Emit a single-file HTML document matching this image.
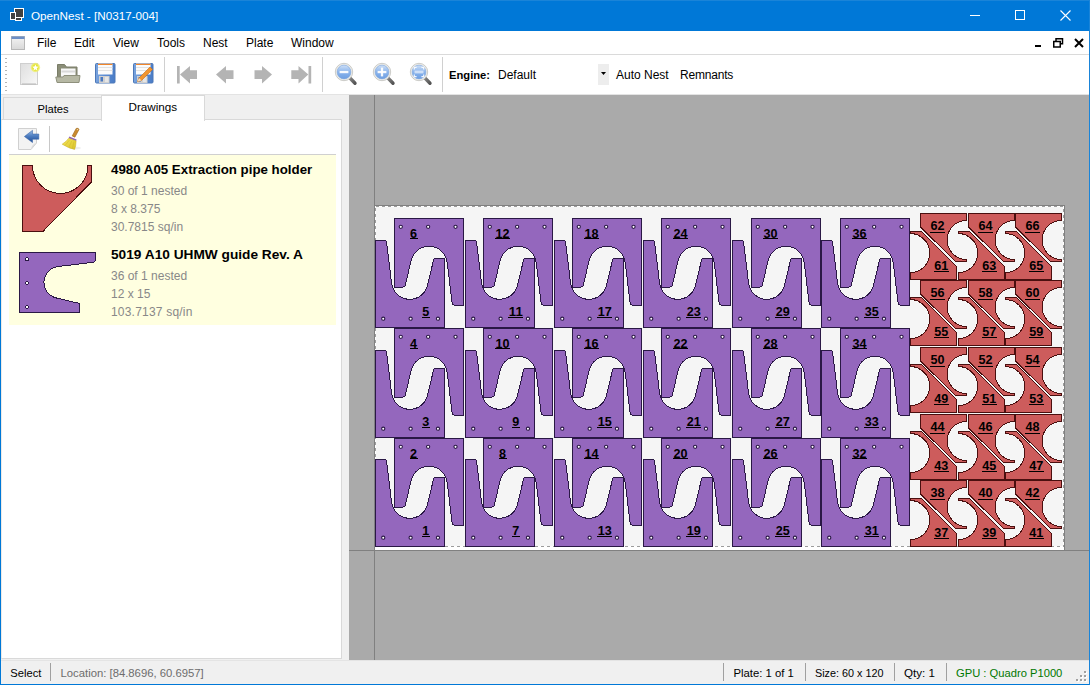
<!DOCTYPE html>
<html><head><meta charset="utf-8"><title>OpenNest</title><style>
html,body{margin:0;padding:0;width:1090px;height:685px;overflow:hidden;background:#fff;}
body{position:relative;font-family:"Liberation Sans",sans-serif;}
.a{position:absolute;}
.t{position:absolute;white-space:nowrap;line-height:1;font-family:"Liberation Sans",sans-serif;}
.lbl{font-family:"Liberation Sans",sans-serif;font-weight:700;font-size:12.2px;fill:#000;}
</style></head><body>
<div class="a" style="left:0px;top:0px;width:1090px;height:685px;background:#0078d7;"></div>
<div class="a" style="left:1px;top:31px;width:1088px;height:653px;background:#fff;"></div>
<div class="a" style="left:0px;top:0px;width:1090px;height:1px;background:#1a84d8;"></div>
<div class="a" style="left:1089px;top:0px;width:1px;height:685px;background:#1a84d8;"></div>
<svg class="a" style="left:10px;top:8px" width="15" height="14" viewBox="0 0 15 14" >
<rect x="4.5" y="0.5" width="9" height="9" fill="#404040" stroke="#fff"/>
<rect x="0.5" y="4.5" width="5" height="7" fill="#404040" stroke="#fff"/>
<rect x="5.5" y="9.5" width="6" height="3" fill="#404040" stroke="#fff"/>
</svg>
<div class="t" style="left:31px;top:9.71px;font-size:11.7px;font-weight:400;color:#fff;">OpenNest - [N0317-004]</div>
<div class="a" style="left:970px;top:15px;width:10px;height:1px;background:#fff;"></div>
<div class="a" style="left:1015px;top:10px;width:8px;height:8px;border:1px solid #fff"></div>
<svg class="a" style="left:1060px;top:10px" width="12" height="11" viewBox="0 0 12 11"><path d="M0.5,0.5 L10.5,10.5 M10.5,0.5 L0.5,10.5" stroke="#fff" stroke-width="1.1"/></svg>
<svg class="a" style="left:11px;top:36px" width="14" height="14" viewBox="0 0 14 14" >
<defs><linearGradient id="mg" x1="0" y1="0" x2="0" y2="1"><stop offset="0" stop-color="#f4f4f4"/><stop offset="1" stop-color="#d8d8d8"/></linearGradient></defs>
<rect x="0.5" y="0.5" width="13" height="13" fill="url(#mg)" stroke="#b8b8b8"/>
<rect x="0.5" y="0.5" width="13" height="2.5" fill="#6d8fc6"/>
</svg>
<div class="t" style="left:37px;top:37.16px;font-size:12px;font-weight:400;color:#000;">File</div>
<div class="t" style="left:74px;top:37.16px;font-size:12px;font-weight:400;color:#000;">Edit</div>
<div class="t" style="left:113px;top:37.16px;font-size:12px;font-weight:400;color:#000;">View</div>
<div class="t" style="left:157px;top:37.16px;font-size:12px;font-weight:400;color:#000;">Tools</div>
<div class="t" style="left:203px;top:37.16px;font-size:12px;font-weight:400;color:#000;">Nest</div>
<div class="t" style="left:246px;top:37.16px;font-size:12px;font-weight:400;color:#000;">Plate</div>
<div class="t" style="left:291px;top:37.16px;font-size:12px;font-weight:400;color:#000;">Window</div>
<div class="a" style="left:1035px;top:45px;width:6px;height:2px;background:#000;"></div>
<svg class="a" style="left:1053px;top:38px" width="11" height="10" viewBox="0 0 11 10"><rect x="3" y="0.75" width="6.5" height="5" fill="none" stroke="#000" stroke-width="1.5"/><rect x="0.75" y="3.5" width="6.5" height="5.5" fill="#fff" stroke="#000" stroke-width="1.5"/></svg>
<svg class="a" style="left:1074px;top:38px" width="10" height="10" viewBox="0 0 10 10"><path d="M1,1 L9,9 M9,1 L1,9" stroke="#000" stroke-width="2"/></svg>
<div class="a" style="left:1px;top:54px;width:1088px;height:1px;background:#dadada;"></div>
<div class="a" style="left:1px;top:94px;width:1088px;height:1px;background:#e3e3e3;"></div>
<div class="a" style="left:5px;top:58px;width:2px;height:34px;background:repeating-linear-gradient(#b4b4b4 0 1px,transparent 1px 4px);"></div>
<div class="a" style="left:164px;top:57px;width:1px;height:35px;background:#d0d0d0;"></div>
<div class="a" style="left:322px;top:57px;width:1px;height:35px;background:#d0d0d0;"></div>
<div class="a" style="left:442px;top:57px;width:1px;height:35px;background:#d0d0d0;"></div>
<svg class="a" style="left:19px;top:62px" width="23" height="24" viewBox="0 0 23 24" >
<defs><linearGradient id="gnew" x1="0" y1="0" x2="1" y2="1"><stop offset="0" stop-color="#dedede"/><stop offset="1" stop-color="#f8f8f8"/></linearGradient><radialGradient id="gstar"><stop offset="0.55" stop-color="#e6e62e"/><stop offset="1" stop-color="#f0f07a" stop-opacity="0.6"/></radialGradient></defs>
<rect x="1.5" y="1.5" width="17" height="21" fill="url(#gnew)" stroke="#cfcfcf"/>
<rect x="3" y="21.5" width="14" height="1" fill="#b8b8b8"/>
<circle cx="16.4" cy="5.5" r="4.8" fill="url(#gstar)"/>
<path d="M16.4,2.4 L17.3,4.6 L19.5,4.8 L17.8,6.3 L18.3,8.5 L16.4,7.3 L14.5,8.5 L15,6.3 L13.3,4.8 L15.5,4.6 Z" fill="#fff"/>
</svg>
<svg class="a" style="left:55px;top:63px" width="26" height="21" viewBox="0 0 26 21" >
<path d="M2.5,1.5 H9.5 L11.5,4 H22 V14 H2.5 Z" fill="#8b8e78" stroke="#7a7d68"/>
<rect x="6" y="5.5" width="14.5" height="9" fill="#f8f8f8"/>
<rect x="6.5" y="7.5" width="13.5" height="2" fill="#d8d8d8"/>
<path d="M0.8,14 H8 L9,12.5 H25 L24,19.5 H2 Z" fill="#b6b8a4" stroke="#8e907c"/>
</svg>
<svg class="a" style="left:95px;top:63px" width="21" height="21" viewBox="0 0 21 21" >
<defs><linearGradient id="gfl" x1="0" y1="0" x2="1" y2="0"><stop offset="0" stop-color="#7aa4de"/><stop offset="0.5" stop-color="#5a8bd2"/><stop offset="1" stop-color="#4a7cc6"/></linearGradient></defs>
<rect x="0.5" y="0.5" width="19.5" height="19.5" rx="1" fill="url(#gfl)" stroke="#4d78b8"/>
<rect x="3" y="0.5" width="14.5" height="11" fill="#fbfbfb"/>
<rect x="3" y="0.8" width="14.5" height="1.2" fill="#f0862a"/>
<rect x="3" y="4" width="14.5" height="0.8" fill="#dcdcdc"/>
<rect x="3" y="7" width="14.5" height="0.8" fill="#dcdcdc"/>
<rect x="4" y="13" width="10.5" height="7" fill="#d0d0d0"/>
<rect x="5.5" y="14" width="2.5" height="4.5" fill="#4a78c0"/>
<rect x="10" y="14" width="3.5" height="5" fill="#e6e6e6"/>
</svg>
<svg class="a" style="left:133px;top:63px" width="21" height="21" viewBox="0 0 21 21" >
<defs><linearGradient id="gfl" x1="0" y1="0" x2="1" y2="0"><stop offset="0" stop-color="#7aa4de"/><stop offset="0.5" stop-color="#5a8bd2"/><stop offset="1" stop-color="#4a7cc6"/></linearGradient></defs>
<rect x="0.5" y="0.5" width="19.5" height="19.5" rx="1" fill="url(#gfl)" stroke="#4d78b8"/>
<rect x="3" y="0.5" width="14.5" height="11" fill="#fbfbfb"/>
<rect x="3" y="0.8" width="14.5" height="1.2" fill="#f0862a"/>
<rect x="3" y="4" width="14.5" height="0.8" fill="#dcdcdc"/>
<rect x="3" y="7" width="14.5" height="0.8" fill="#dcdcdc"/>
<rect x="4" y="13" width="10.5" height="7" fill="#d0d0d0"/>
<rect x="5.5" y="14" width="2.5" height="4.5" fill="#4a78c0"/>
<rect x="10" y="14" width="3.5" height="5" fill="#e6e6e6"/>
<path d="M4.5,18.5 L6,15 L17,4 L19.5,6.5 L8.5,17.5 Z" fill="#f2952e" stroke="#c86d1a" stroke-width="0.6"/>
<path d="M4.5,18.5 L6,15 L8.5,17.5 Z" fill="#f4dcb8"/></svg>
<svg class="a" style="left:177px;top:66px" width="21" height="19" viewBox="0 0 21 19" ><rect x="0" y="0" width="2.7" height="17.5" fill="#b4b4b4"/><path d="M3,8.5 L13,0 V4.2 H20 V13 H13 V17.5 Z" fill="#b4b4b4"/></svg>
<svg class="a" style="left:215.5px;top:66px" width="21" height="19" viewBox="0 0 21 19" ><path d="M0,8.5 L10,0 V4.2 H17.5 V13 H10 V17.5 Z" fill="#b4b4b4"/></svg>
<svg class="a" style="left:254px;top:66px" width="21" height="19" viewBox="0 0 21 19" ><path d="M18,8.5 L8,0 V4.2 H0.5 V13 H8 V17.5 Z" fill="#b4b4b4"/></svg>
<svg class="a" style="left:290.8px;top:66px" width="21" height="19" viewBox="0 0 21 19" ><rect x="17.5" y="0" width="2.7" height="17.5" fill="#b4b4b4"/><path d="M17.3,8.5 L7.5,0 V4.2 H0.3 V13 H7.5 V17.5 Z" fill="#b4b4b4"/></svg>
<svg class="a" style="left:333.6px;top:61.6px" width="24" height="24" viewBox="0 0 24 24" >
<defs><linearGradient id="glens" x1="0" y1="0" x2="0" y2="1"><stop offset="0" stop-color="#cfe0f7"/><stop offset="0.5" stop-color="#8ab4ec"/><stop offset="1" stop-color="#6e9fe2"/></linearGradient>
<linearGradient id="ghdl" x1="0" y1="0" x2="1" y2="1"><stop offset="0" stop-color="#8a8a8a"/><stop offset="1" stop-color="#555"/></linearGradient></defs>
<path d="M15.2,15.2 L21,21.2" stroke="url(#ghdl)" stroke-width="3.4" stroke-linecap="round"/>
<circle cx="10" cy="10" r="8.7" fill="#eeeeea" stroke="#b9b9b4" stroke-width="0.7"/>
<circle cx="10" cy="10" r="6.9" fill="url(#glens)" stroke="#7aa3dc" stroke-width="0.6"/>
<rect x="5.6" y="8.9" width="8.8" height="2.3" fill="#fff" opacity="0.92"/></svg>
<svg class="a" style="left:371.5px;top:61.6px" width="24" height="24" viewBox="0 0 24 24" >
<defs><linearGradient id="glens" x1="0" y1="0" x2="0" y2="1"><stop offset="0" stop-color="#cfe0f7"/><stop offset="0.5" stop-color="#8ab4ec"/><stop offset="1" stop-color="#6e9fe2"/></linearGradient>
<linearGradient id="ghdl" x1="0" y1="0" x2="1" y2="1"><stop offset="0" stop-color="#8a8a8a"/><stop offset="1" stop-color="#555"/></linearGradient></defs>
<path d="M15.2,15.2 L21,21.2" stroke="url(#ghdl)" stroke-width="3.4" stroke-linecap="round"/>
<circle cx="10" cy="10" r="8.7" fill="#eeeeea" stroke="#b9b9b4" stroke-width="0.7"/>
<circle cx="10" cy="10" r="6.9" fill="url(#glens)" stroke="#7aa3dc" stroke-width="0.6"/>
<rect x="5.6" y="8.9" width="8.8" height="2.3" fill="#fff" opacity="0.92"/><rect x="8.85" y="5.6" width="2.3" height="8.8" fill="#fff" opacity="0.92"/></svg>
<svg class="a" style="left:409.3px;top:61.6px" width="24" height="24" viewBox="0 0 24 24" >
<defs><linearGradient id="glens" x1="0" y1="0" x2="0" y2="1"><stop offset="0" stop-color="#cfe0f7"/><stop offset="0.5" stop-color="#8ab4ec"/><stop offset="1" stop-color="#6e9fe2"/></linearGradient>
<linearGradient id="ghdl" x1="0" y1="0" x2="1" y2="1"><stop offset="0" stop-color="#8a8a8a"/><stop offset="1" stop-color="#555"/></linearGradient></defs>
<path d="M15.2,15.2 L21,21.2" stroke="url(#ghdl)" stroke-width="3.4" stroke-linecap="round"/>
<circle cx="10" cy="10" r="8.7" fill="#eeeeea" stroke="#b9b9b4" stroke-width="0.7"/>
<circle cx="10" cy="10" r="6.9" fill="url(#glens)" stroke="#7aa3dc" stroke-width="0.6"/>
<path d="M5.3,7.6 V5.3 H7.6 M12.4,5.3 H14.7 V7.6 M14.7,12.4 V14.7 H12.4 M7.6,14.7 H5.3 V12.4" fill="none" stroke="#fff" stroke-width="1.2" opacity="0.9"/><rect x="5.5" y="8.6" width="9" height="2.8" fill="#e4eefb" opacity="0.75"/></svg>
<div class="t" style="left:449px;top:69.82px;font-size:11.2px;font-weight:700;color:#000;">Engine:</div>
<div class="t" style="left:498px;top:69.16px;font-size:12px;font-weight:400;color:#000;">Default</div>
<div class="a" style="left:598px;top:64px;width:11px;height:21px;background:#ededed;"></div>
<svg class="a" style="left:601px;top:72px" width="6" height="4"><path d="M0,0 H5 L2.5,3 Z" fill="#000"/></svg>
<div class="t" style="left:616px;top:69.16px;font-size:12px;font-weight:400;color:#000;">Auto Nest</div>
<div class="t" style="left:680px;top:69.16px;font-size:12px;font-weight:400;color:#000;letter-spacing:-0.2px">Remnants</div>
<div class="a" style="left:1px;top:95px;width:348px;height:565px;background:#f0f0f0;"></div>
<div class="a" style="left:1px;top:119px;width:339px;height:538px;background:#fff;border:1px solid #d9d9d9;border-left-color:#eeeae6"></div>
<div class="a" style="left:3px;top:97px;width:97px;height:21px;background:#f0f0f0;border:1px solid #d9d9d9;border-bottom:none"></div>
<div class="a" style="left:101px;top:95px;width:102px;height:25px;background:#fff;border:1px solid #d9d9d9;border-bottom:none"></div>
<div class="t" style="left:37.5px;top:103.82px;font-size:11.2px;font-weight:400;color:#000;">Plates</div>
<div class="t" style="left:128.5px;top:101.41px;font-size:11.7px;font-weight:400;color:#000;">Drawings</div>
<svg class="a" style="left:17px;top:127px" width="24" height="24" viewBox="0 0 24 24" >
<defs><linearGradient id="gbk" x1="0" y1="0" x2="0" y2="1"><stop offset="0" stop-color="#9dbde6"/><stop offset="0.45" stop-color="#4f7fc2"/><stop offset="1" stop-color="#1d4b96"/></linearGradient></defs>
<path d="M1.5,1.5 H19.5 V16 L14,22.5 H1.5 Z" fill="#f3f3f3" stroke="#d0d0d0"/>
<path d="M14,22.5 Q14.5,17 19.5,16 Q16,19 14,22.5 Z" fill="#dcdcdc"/>
<path d="M7.4,9.5 L15.5,3.3 V7 H21.8 V12.2 H15.5 V15.6 Z" fill="url(#gbk)" stroke="#2c5aa0" stroke-width="0.5"/>
</svg>
<svg class="a" style="left:60px;top:127px" width="24" height="24" viewBox="0 0 24 24" >
<defs><linearGradient id="gbr" x1="0" y1="0" x2="1" y2="1"><stop offset="0" stop-color="#f6e65a"/><stop offset="1" stop-color="#d9c22a"/></linearGradient></defs>
<ellipse cx="15" cy="21" rx="6" ry="1.5" fill="#000" opacity="0.07"/>
<path d="M16.2,1.4 Q18.6,0.6 19,2.6 L14.9,10.2 L12.2,8.9 Z" fill="#c98a2e" stroke="#9b6318" stroke-width="0.6"/>
<circle cx="17.4" cy="2.6" r="0.6" fill="#f4e2c0"/>
<path d="M9.3,9.6 L16.6,12.4 L16.1,14 L8.7,11.2 Z" fill="#8f63b5"/>
<path d="M8.7,11.2 L16.1,14 Q16,19 14.6,22.4 Q8.5,21.2 2.2,17.2 Q6.5,14.6 8.7,11.2 Z" fill="url(#gbr)" stroke="#c6ad22" stroke-width="0.5"/>
<path d="M9.5,13 L5,18.5 M11.8,14 L9,20 M14,14.6 L12.4,21.4" stroke="#c9b226" stroke-width="0.5" opacity="0.8"/>
</svg>
<div class="a" style="left:49px;top:126px;width:1px;height:26px;background:#c8c8c8;"></div>
<div class="a" style="left:9px;top:154px;width:327px;height:1px;background:#d0d0d0;"></div>
<div class="a" style="left:9px;top:155px;width:327px;height:170px;background:#ffffe0;"></div>
<div class="t" style="left:111px;top:163.09px;font-size:13.3px;font-weight:700;color:#000;">4980 A05 Extraction pipe holder</div>
<div class="t" style="left:111px;top:185.16px;font-size:12px;font-weight:400;color:#888;">30 of 1 nested</div>
<div class="t" style="left:111px;top:202.86px;font-size:12px;font-weight:400;color:#888;">8 x 8.375</div>
<div class="t" style="left:111px;top:220.56px;font-size:12px;font-weight:400;color:#888;">30.7815 sq/in</div>
<div class="t" style="left:111px;top:247.77px;font-size:13.7px;font-weight:700;color:#000;">5019 A10 UHMW guide Rev. A</div>
<div class="t" style="left:111px;top:270.16px;font-size:12px;font-weight:400;color:#888;">36 of 1 nested</div>
<div class="t" style="left:111px;top:287.86px;font-size:12px;font-weight:400;color:#888;">12 x 15</div>
<div class="t" style="left:111px;top:306.46px;font-size:12px;font-weight:400;color:#888;letter-spacing:0.2px">103.7137 sq/in</div>
<svg class="a" style="left:0;top:0" width="340" height="330" shape-rendering="crispEdges"><path transform="translate(22.7,165.7) scale(1.43106)" d="M0,0 H6.876 A19.367,19.367 0 0 0 45.611,0 H47.989 V11.460 L14.210,45.840 H0 Z" fill="#cd5c5c" stroke="#4a0f0f" stroke-width="1" vector-effect="non-scaling-stroke"/><g transform="translate(19.8,312.50) scale(0.87260) rotate(-90)"><path d="M0,0 H68.760 V86.550 H59.707 Q57.873,86.550 57.650,84.717 L52.695,43.918 A18.336,18.464 0 0 0 16.659,41.876 L10.739,66.867 Q10.314,68.663 8.480,68.663 H0 Z" fill="#9467bd" stroke="#2a1845" stroke-width="1" vector-effect="non-scaling-stroke"/><circle cx="6.303" cy="8.309" r="1.95" fill="#fff" stroke="#2a1845" stroke-width="1.146"/><circle cx="33.635" cy="8.309" r="1.95" fill="#fff" stroke="#2a1845" stroke-width="1.146"/><circle cx="61.025" cy="8.309" r="1.95" fill="#fff" stroke="#2a1845" stroke-width="1.146"/></g></svg>
<div class="a" style="left:349px;top:95px;width:740px;height:565px;background:#aaaaaa;overflow:hidden">
<svg width="740" height="565" viewBox="349 95 740 565" style="position:absolute;left:0;top:0" shape-rendering="crispEdges">
 <rect x="375" y="206" width="689" height="344" fill="#f5f5f5"/>
 <rect x="375" y="547" width="689" height="3" fill="#fff"/>
 <line x1="374.5" y1="95" x2="374.5" y2="660" stroke="#808080"/>
 <line x1="349" y1="550.5" x2="1089" y2="550.5" stroke="#808080"/>
 <line x1="375" y1="205.5" x2="1065" y2="205.5" stroke="#808080"/>
 <line x1="1064.5" y1="205" x2="1064.5" y2="550" stroke="#808080"/>
 <rect x="375.5" y="206.5" width="688" height="340" fill="none" stroke="#fff"/>
 <rect x="375.5" y="206.5" width="688" height="340" fill="none" stroke="#9c9c9c" stroke-dasharray="3,3"/>
<defs>
<g id="pa"><path d="M0,0 H68.760 V86.550 H59.707 Q57.873,86.550 57.650,84.717 L52.695,43.918 A18.336,18.464 0 0 0 16.659,41.876 L10.739,66.867 Q10.314,68.663 8.480,68.663 H0 Z" fill="#9467bd" stroke="#2a1845" stroke-width="1"/><circle cx="6.303" cy="8.366" r="1.6" fill="#fff" stroke="#2a1845" stroke-width="1.1" shape-rendering="auto"/><circle cx="33.635" cy="8.366" r="1.6" fill="#fff" stroke="#2a1845" stroke-width="1.1" shape-rendering="auto"/><circle cx="61.025" cy="8.366" r="1.6" fill="#fff" stroke="#2a1845" stroke-width="1.1" shape-rendering="auto"/></g>
<g id="ra"><path d="M0,0 H45.840 V6.924 A19.367,19.503 0 0 0 45.840,45.929 V48.324 H35.240 L0,13.444 Z" fill="#cd5c5c" stroke="#4a0f0f" stroke-width="1"/></g>
</defs>
<use href="#pa" transform="translate(394.50,218.50)"/>
<use href="#pa" transform="translate(444.26,327.05) rotate(180)"/>
<use href="#pa" transform="translate(394.50,328.50)"/>
<use href="#pa" transform="translate(444.26,437.05) rotate(180)"/>
<use href="#pa" transform="translate(394.50,438.50)"/>
<use href="#pa" transform="translate(444.26,546.05) rotate(180)"/>
<use href="#pa" transform="translate(483.50,218.50)"/>
<use href="#pa" transform="translate(534.26,327.05) rotate(180)"/>
<use href="#pa" transform="translate(483.50,328.50)"/>
<use href="#pa" transform="translate(534.26,437.05) rotate(180)"/>
<use href="#pa" transform="translate(483.50,438.50)"/>
<use href="#pa" transform="translate(534.26,546.05) rotate(180)"/>
<use href="#pa" transform="translate(572.50,218.50)"/>
<use href="#pa" transform="translate(623.26,327.05) rotate(180)"/>
<use href="#pa" transform="translate(572.50,328.50)"/>
<use href="#pa" transform="translate(623.26,437.05) rotate(180)"/>
<use href="#pa" transform="translate(572.50,438.50)"/>
<use href="#pa" transform="translate(623.26,546.05) rotate(180)"/>
<use href="#pa" transform="translate(661.50,218.50)"/>
<use href="#pa" transform="translate(712.26,327.05) rotate(180)"/>
<use href="#pa" transform="translate(661.50,328.50)"/>
<use href="#pa" transform="translate(712.26,437.05) rotate(180)"/>
<use href="#pa" transform="translate(661.50,438.50)"/>
<use href="#pa" transform="translate(712.26,546.05) rotate(180)"/>
<use href="#pa" transform="translate(751.50,218.50)"/>
<use href="#pa" transform="translate(801.26,327.05) rotate(180)"/>
<use href="#pa" transform="translate(751.50,328.50)"/>
<use href="#pa" transform="translate(801.26,437.05) rotate(180)"/>
<use href="#pa" transform="translate(751.50,438.50)"/>
<use href="#pa" transform="translate(801.26,546.05) rotate(180)"/>
<use href="#pa" transform="translate(840.50,218.50)"/>
<use href="#pa" transform="translate(890.26,327.05) rotate(180)"/>
<use href="#pa" transform="translate(840.50,328.50)"/>
<use href="#pa" transform="translate(890.26,437.05) rotate(180)"/>
<use href="#pa" transform="translate(840.50,438.50)"/>
<use href="#pa" transform="translate(890.26,546.05) rotate(180)"/>
<use href="#ra" transform="translate(920.50,213.50)"/>
<use href="#ra" transform="translate(956.34,279.52) rotate(180)"/>
<use href="#ra" transform="translate(920.50,280.50)"/>
<use href="#ra" transform="translate(956.34,345.52) rotate(180)"/>
<use href="#ra" transform="translate(920.50,347.50)"/>
<use href="#ra" transform="translate(956.34,412.52) rotate(180)"/>
<use href="#ra" transform="translate(920.50,414.50)"/>
<use href="#ra" transform="translate(956.34,479.52) rotate(180)"/>
<use href="#ra" transform="translate(920.50,480.50)"/>
<use href="#ra" transform="translate(956.34,546.52) rotate(180)"/>
<use href="#ra" transform="translate(968.50,213.50)"/>
<use href="#ra" transform="translate(1004.34,279.52) rotate(180)"/>
<use href="#ra" transform="translate(968.50,280.50)"/>
<use href="#ra" transform="translate(1004.34,345.52) rotate(180)"/>
<use href="#ra" transform="translate(968.50,347.50)"/>
<use href="#ra" transform="translate(1004.34,412.52) rotate(180)"/>
<use href="#ra" transform="translate(968.50,414.50)"/>
<use href="#ra" transform="translate(1004.34,479.52) rotate(180)"/>
<use href="#ra" transform="translate(968.50,480.50)"/>
<use href="#ra" transform="translate(1004.34,546.52) rotate(180)"/>
<use href="#ra" transform="translate(1015.50,213.50)"/>
<use href="#ra" transform="translate(1051.34,279.52) rotate(180)"/>
<use href="#ra" transform="translate(1015.50,280.50)"/>
<use href="#ra" transform="translate(1051.34,345.52) rotate(180)"/>
<use href="#ra" transform="translate(1015.50,347.50)"/>
<use href="#ra" transform="translate(1051.34,412.52) rotate(180)"/>
<use href="#ra" transform="translate(1015.50,414.50)"/>
<use href="#ra" transform="translate(1051.34,479.52) rotate(180)"/>
<use href="#ra" transform="translate(1015.50,480.50)"/>
<use href="#ra" transform="translate(1051.34,546.52) rotate(180)"/>
<text x="410.1" y="237.8" textLength="7.0" lengthAdjust="spacingAndGlyphs" class="lbl">6</text>
<rect x="410" y="238" width="8" height="1" fill="#000"/>
<text x="422.3" y="315.9" textLength="7.0" lengthAdjust="spacingAndGlyphs" class="lbl">5</text>
<rect x="422" y="317" width="8" height="1" fill="#000"/>
<text x="410.1" y="347.8" textLength="7.0" lengthAdjust="spacingAndGlyphs" class="lbl">4</text>
<rect x="410" y="348" width="8" height="1" fill="#000"/>
<text x="422.3" y="425.9" textLength="7.0" lengthAdjust="spacingAndGlyphs" class="lbl">3</text>
<rect x="422" y="427" width="8" height="1" fill="#000"/>
<text x="410.1" y="457.8" textLength="7.0" lengthAdjust="spacingAndGlyphs" class="lbl">2</text>
<rect x="410" y="458" width="8" height="1" fill="#000"/>
<text x="422.3" y="534.8" textLength="7.0" lengthAdjust="spacingAndGlyphs" class="lbl">1</text>
<rect x="422" y="536" width="8" height="1" fill="#000"/>
<text x="495.6" y="237.8" textLength="14.0" lengthAdjust="spacingAndGlyphs" class="lbl">12</text>
<rect x="495" y="238" width="15" height="1" fill="#000"/>
<text x="508.8" y="315.9" textLength="14.0" lengthAdjust="spacingAndGlyphs" class="lbl">11</text>
<rect x="508" y="317" width="15" height="1" fill="#000"/>
<text x="495.6" y="347.8" textLength="14.0" lengthAdjust="spacingAndGlyphs" class="lbl">10</text>
<rect x="495" y="348" width="15" height="1" fill="#000"/>
<text x="512.3" y="425.9" textLength="7.0" lengthAdjust="spacingAndGlyphs" class="lbl">9</text>
<rect x="512" y="427" width="8" height="1" fill="#000"/>
<text x="499.1" y="457.8" textLength="7.0" lengthAdjust="spacingAndGlyphs" class="lbl">8</text>
<rect x="499" y="458" width="8" height="1" fill="#000"/>
<text x="512.3" y="534.8" textLength="7.0" lengthAdjust="spacingAndGlyphs" class="lbl">7</text>
<rect x="512" y="536" width="8" height="1" fill="#000"/>
<text x="584.6" y="237.8" textLength="14.0" lengthAdjust="spacingAndGlyphs" class="lbl">18</text>
<rect x="584" y="238" width="15" height="1" fill="#000"/>
<text x="597.8" y="315.9" textLength="14.0" lengthAdjust="spacingAndGlyphs" class="lbl">17</text>
<rect x="597" y="317" width="15" height="1" fill="#000"/>
<text x="584.6" y="347.8" textLength="14.0" lengthAdjust="spacingAndGlyphs" class="lbl">16</text>
<rect x="584" y="348" width="15" height="1" fill="#000"/>
<text x="597.8" y="425.9" textLength="14.0" lengthAdjust="spacingAndGlyphs" class="lbl">15</text>
<rect x="597" y="427" width="15" height="1" fill="#000"/>
<text x="584.6" y="457.8" textLength="14.0" lengthAdjust="spacingAndGlyphs" class="lbl">14</text>
<rect x="584" y="458" width="15" height="1" fill="#000"/>
<text x="597.8" y="534.8" textLength="14.0" lengthAdjust="spacingAndGlyphs" class="lbl">13</text>
<rect x="597" y="536" width="15" height="1" fill="#000"/>
<text x="673.6" y="237.8" textLength="14.0" lengthAdjust="spacingAndGlyphs" class="lbl">24</text>
<rect x="673" y="238" width="15" height="1" fill="#000"/>
<text x="686.8" y="315.9" textLength="14.0" lengthAdjust="spacingAndGlyphs" class="lbl">23</text>
<rect x="686" y="317" width="15" height="1" fill="#000"/>
<text x="673.6" y="347.8" textLength="14.0" lengthAdjust="spacingAndGlyphs" class="lbl">22</text>
<rect x="673" y="348" width="15" height="1" fill="#000"/>
<text x="686.8" y="425.9" textLength="14.0" lengthAdjust="spacingAndGlyphs" class="lbl">21</text>
<rect x="686" y="427" width="15" height="1" fill="#000"/>
<text x="673.6" y="457.8" textLength="14.0" lengthAdjust="spacingAndGlyphs" class="lbl">20</text>
<rect x="673" y="458" width="15" height="1" fill="#000"/>
<text x="686.8" y="534.8" textLength="14.0" lengthAdjust="spacingAndGlyphs" class="lbl">19</text>
<rect x="686" y="536" width="15" height="1" fill="#000"/>
<text x="763.6" y="237.8" textLength="14.0" lengthAdjust="spacingAndGlyphs" class="lbl">30</text>
<rect x="763" y="238" width="15" height="1" fill="#000"/>
<text x="775.8" y="315.9" textLength="14.0" lengthAdjust="spacingAndGlyphs" class="lbl">29</text>
<rect x="775" y="317" width="15" height="1" fill="#000"/>
<text x="763.6" y="347.8" textLength="14.0" lengthAdjust="spacingAndGlyphs" class="lbl">28</text>
<rect x="763" y="348" width="15" height="1" fill="#000"/>
<text x="775.8" y="425.9" textLength="14.0" lengthAdjust="spacingAndGlyphs" class="lbl">27</text>
<rect x="775" y="427" width="15" height="1" fill="#000"/>
<text x="763.6" y="457.8" textLength="14.0" lengthAdjust="spacingAndGlyphs" class="lbl">26</text>
<rect x="763" y="458" width="15" height="1" fill="#000"/>
<text x="775.8" y="534.8" textLength="14.0" lengthAdjust="spacingAndGlyphs" class="lbl">25</text>
<rect x="775" y="536" width="15" height="1" fill="#000"/>
<text x="852.6" y="237.8" textLength="14.0" lengthAdjust="spacingAndGlyphs" class="lbl">36</text>
<rect x="852" y="238" width="15" height="1" fill="#000"/>
<text x="864.8" y="315.9" textLength="14.0" lengthAdjust="spacingAndGlyphs" class="lbl">35</text>
<rect x="864" y="317" width="15" height="1" fill="#000"/>
<text x="852.6" y="347.8" textLength="14.0" lengthAdjust="spacingAndGlyphs" class="lbl">34</text>
<rect x="852" y="348" width="15" height="1" fill="#000"/>
<text x="864.8" y="425.9" textLength="14.0" lengthAdjust="spacingAndGlyphs" class="lbl">33</text>
<rect x="864" y="427" width="15" height="1" fill="#000"/>
<text x="852.6" y="457.8" textLength="14.0" lengthAdjust="spacingAndGlyphs" class="lbl">32</text>
<rect x="852" y="458" width="15" height="1" fill="#000"/>
<text x="864.8" y="534.8" textLength="14.0" lengthAdjust="spacingAndGlyphs" class="lbl">31</text>
<rect x="864" y="536" width="15" height="1" fill="#000"/>
<text x="930.6" y="230.0" textLength="14.0" lengthAdjust="spacingAndGlyphs" class="lbl">62</text>
<rect x="930" y="232" width="15" height="1" fill="#000"/>
<text x="934.2" y="269.6" textLength="14.0" lengthAdjust="spacingAndGlyphs" class="lbl">61</text>
<rect x="934" y="271" width="15" height="1" fill="#000"/>
<text x="930.6" y="297.0" textLength="14.0" lengthAdjust="spacingAndGlyphs" class="lbl">56</text>
<rect x="930" y="299" width="15" height="1" fill="#000"/>
<text x="934.2" y="335.6" textLength="14.0" lengthAdjust="spacingAndGlyphs" class="lbl">55</text>
<rect x="934" y="337" width="15" height="1" fill="#000"/>
<text x="930.6" y="364.0" textLength="14.0" lengthAdjust="spacingAndGlyphs" class="lbl">50</text>
<rect x="930" y="366" width="15" height="1" fill="#000"/>
<text x="934.2" y="402.6" textLength="14.0" lengthAdjust="spacingAndGlyphs" class="lbl">49</text>
<rect x="934" y="404" width="15" height="1" fill="#000"/>
<text x="930.6" y="431.0" textLength="14.0" lengthAdjust="spacingAndGlyphs" class="lbl">44</text>
<rect x="930" y="433" width="15" height="1" fill="#000"/>
<text x="934.2" y="469.6" textLength="14.0" lengthAdjust="spacingAndGlyphs" class="lbl">43</text>
<rect x="934" y="471" width="15" height="1" fill="#000"/>
<text x="930.6" y="497.0" textLength="14.0" lengthAdjust="spacingAndGlyphs" class="lbl">38</text>
<rect x="930" y="499" width="15" height="1" fill="#000"/>
<text x="934.2" y="536.6" textLength="14.0" lengthAdjust="spacingAndGlyphs" class="lbl">37</text>
<rect x="934" y="538" width="15" height="1" fill="#000"/>
<text x="978.6" y="230.0" textLength="14.0" lengthAdjust="spacingAndGlyphs" class="lbl">64</text>
<rect x="978" y="232" width="15" height="1" fill="#000"/>
<text x="982.2" y="269.6" textLength="14.0" lengthAdjust="spacingAndGlyphs" class="lbl">63</text>
<rect x="982" y="271" width="15" height="1" fill="#000"/>
<text x="978.6" y="297.0" textLength="14.0" lengthAdjust="spacingAndGlyphs" class="lbl">58</text>
<rect x="978" y="299" width="15" height="1" fill="#000"/>
<text x="982.2" y="335.6" textLength="14.0" lengthAdjust="spacingAndGlyphs" class="lbl">57</text>
<rect x="982" y="337" width="15" height="1" fill="#000"/>
<text x="978.6" y="364.0" textLength="14.0" lengthAdjust="spacingAndGlyphs" class="lbl">52</text>
<rect x="978" y="366" width="15" height="1" fill="#000"/>
<text x="982.2" y="402.6" textLength="14.0" lengthAdjust="spacingAndGlyphs" class="lbl">51</text>
<rect x="982" y="404" width="15" height="1" fill="#000"/>
<text x="978.6" y="431.0" textLength="14.0" lengthAdjust="spacingAndGlyphs" class="lbl">46</text>
<rect x="978" y="433" width="15" height="1" fill="#000"/>
<text x="982.2" y="469.6" textLength="14.0" lengthAdjust="spacingAndGlyphs" class="lbl">45</text>
<rect x="982" y="471" width="15" height="1" fill="#000"/>
<text x="978.6" y="497.0" textLength="14.0" lengthAdjust="spacingAndGlyphs" class="lbl">40</text>
<rect x="978" y="499" width="15" height="1" fill="#000"/>
<text x="982.2" y="536.6" textLength="14.0" lengthAdjust="spacingAndGlyphs" class="lbl">39</text>
<rect x="982" y="538" width="15" height="1" fill="#000"/>
<text x="1025.6" y="230.0" textLength="14.0" lengthAdjust="spacingAndGlyphs" class="lbl">66</text>
<rect x="1025" y="232" width="15" height="1" fill="#000"/>
<text x="1029.2" y="269.6" textLength="14.0" lengthAdjust="spacingAndGlyphs" class="lbl">65</text>
<rect x="1029" y="271" width="15" height="1" fill="#000"/>
<text x="1025.6" y="297.0" textLength="14.0" lengthAdjust="spacingAndGlyphs" class="lbl">60</text>
<rect x="1025" y="299" width="15" height="1" fill="#000"/>
<text x="1029.2" y="335.6" textLength="14.0" lengthAdjust="spacingAndGlyphs" class="lbl">59</text>
<rect x="1029" y="337" width="15" height="1" fill="#000"/>
<text x="1025.6" y="364.0" textLength="14.0" lengthAdjust="spacingAndGlyphs" class="lbl">54</text>
<rect x="1025" y="366" width="15" height="1" fill="#000"/>
<text x="1029.2" y="402.6" textLength="14.0" lengthAdjust="spacingAndGlyphs" class="lbl">53</text>
<rect x="1029" y="404" width="15" height="1" fill="#000"/>
<text x="1025.6" y="431.0" textLength="14.0" lengthAdjust="spacingAndGlyphs" class="lbl">48</text>
<rect x="1025" y="433" width="15" height="1" fill="#000"/>
<text x="1029.2" y="469.6" textLength="14.0" lengthAdjust="spacingAndGlyphs" class="lbl">47</text>
<rect x="1029" y="471" width="15" height="1" fill="#000"/>
<text x="1025.6" y="497.0" textLength="14.0" lengthAdjust="spacingAndGlyphs" class="lbl">42</text>
<rect x="1025" y="499" width="15" height="1" fill="#000"/>
<text x="1029.2" y="536.6" textLength="14.0" lengthAdjust="spacingAndGlyphs" class="lbl">41</text>
<rect x="1029" y="538" width="15" height="1" fill="#000"/>
</svg></div>
<div class="a" style="left:1px;top:660px;width:1088px;height:24px;background:#f0f0f0;"></div>
<div class="a" style="left:1px;top:660px;width:1088px;height:1px;background:#e4e4e4;"></div>
<div class="t" style="left:10.3px;top:667.82px;font-size:11.2px;font-weight:400;color:#000;">Select</div>
<div class="a" style="left:50px;top:663px;width:1px;height:18px;background:#a0a0a0;"></div>
<div class="t" style="left:60.5px;top:667.73px;font-size:11.3px;font-weight:400;color:#6d6d6d;">Location: [84.8696, 60.6957]</div>
<div class="a" style="left:723px;top:663px;width:1px;height:18px;background:#a0a0a0;"></div>
<div class="a" style="left:805px;top:663px;width:1px;height:18px;background:#a0a0a0;"></div>
<div class="a" style="left:894px;top:663px;width:1px;height:18px;background:#a0a0a0;"></div>
<div class="a" style="left:946px;top:663px;width:1px;height:18px;background:#a0a0a0;"></div>
<div class="t" style="left:733.5px;top:667.73px;font-size:11.3px;font-weight:400;color:#000;">Plate: 1 of 1</div>
<div class="t" style="left:815px;top:668.14px;font-size:10.8px;font-weight:400;color:#000;">Size: 60 x 120</div>
<div class="t" style="left:904px;top:667.49px;font-size:11.6px;font-weight:400;color:#000;">Qty: 1</div>
<div class="t" style="left:956px;top:667.82px;font-size:11.2px;font-weight:400;color:#007800;">GPU : Quadro P1000</div>
<div class="a" style="left:1085px;top:672px;width:2px;height:2px;background:#fff;"></div>
<div class="a" style="left:1084px;top:671px;width:2px;height:2px;background:#a0a0a0;"></div>
<div class="a" style="left:1081px;top:676px;width:2px;height:2px;background:#fff;"></div>
<div class="a" style="left:1080px;top:675px;width:2px;height:2px;background:#a0a0a0;"></div>
<div class="a" style="left:1085px;top:676px;width:2px;height:2px;background:#fff;"></div>
<div class="a" style="left:1084px;top:675px;width:2px;height:2px;background:#a0a0a0;"></div>
<div class="a" style="left:1077px;top:680px;width:2px;height:2px;background:#fff;"></div>
<div class="a" style="left:1076px;top:679px;width:2px;height:2px;background:#a0a0a0;"></div>
<div class="a" style="left:1081px;top:680px;width:2px;height:2px;background:#fff;"></div>
<div class="a" style="left:1080px;top:679px;width:2px;height:2px;background:#a0a0a0;"></div>
<div class="a" style="left:1085px;top:680px;width:2px;height:2px;background:#fff;"></div>
<div class="a" style="left:1084px;top:679px;width:2px;height:2px;background:#a0a0a0;"></div>
</body></html>
